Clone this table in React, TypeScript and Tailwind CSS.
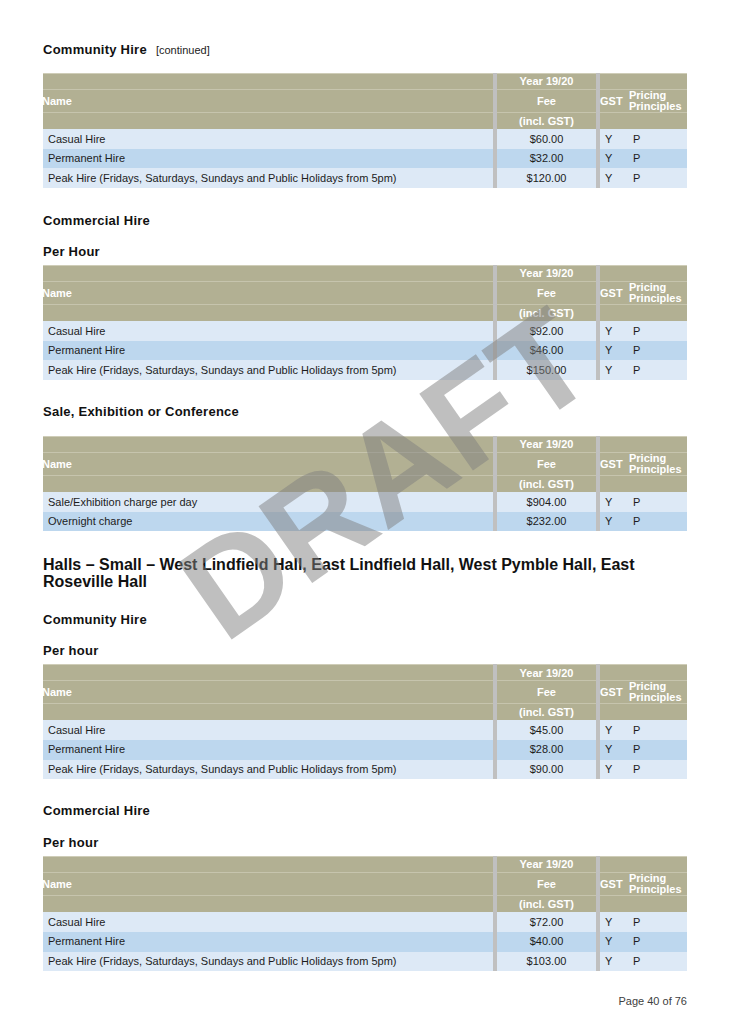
import React from 'react';

type Row = { name: string; fee: string };

const community1: Row[] = [
  { name: 'Casual Hire', fee: '$60.00' },
  { name: 'Permanent Hire', fee: '$32.00' },
  { name: 'Peak Hire (Fridays, Saturdays, Sundays and Public Holidays from 5pm)', fee: '$120.00' },
];
const commercial1: Row[] = [
  { name: 'Casual Hire', fee: '$92.00' },
  { name: 'Permanent Hire', fee: '$46.00' },
  { name: 'Peak Hire (Fridays, Saturdays, Sundays and Public Holidays from 5pm)', fee: '$150.00' },
];
const sale: Row[] = [
  { name: 'Sale/Exhibition charge per day', fee: '$904.00' },
  { name: 'Overnight charge', fee: '$232.00' },
];
const community2: Row[] = [
  { name: 'Casual Hire', fee: '$45.00' },
  { name: 'Permanent Hire', fee: '$28.00' },
  { name: 'Peak Hire (Fridays, Saturdays, Sundays and Public Holidays from 5pm)', fee: '$90.00' },
];
const commercial2: Row[] = [
  { name: 'Casual Hire', fee: '$72.00' },
  { name: 'Permanent Hire', fee: '$40.00' },
  { name: 'Peak Hire (Fridays, Saturdays, Sundays and Public Holidays from 5pm)', fee: '$103.00' },
];

// three stacked header bands, faint lines between them
function HeadCol({ className, top, mid, bottom }: {
  className: string; top?: React.ReactNode; mid?: React.ReactNode; bottom?: React.ReactNode;
}) {
  return (
    <div className={`flex flex-col ${className}`}>
      <div className="h-[16px] border-t border-[#cfcdb8] flex items-center justify-center">{top}</div>
      <div className="h-[23px] border-t border-[#c6c4ad] flex items-center">{mid}</div>
      <div className="h-[17px] border-t border-[#c6c4ad] flex items-center justify-center">{bottom}</div>
    </div>
  );
}

const Sep = () => <div className="w-[4px] shrink-0 bg-[#c0c0c0]" />;

function FeeTable({ rows }: { rows: Row[] }) {
  return (
    <div className="w-[644px] text-[11px]">
      <div className="flex h-[56px] bg-[#b2b093] text-white font-bold">
        <HeadCol className="w-[450px]" mid={<span className="-ml-px">Name</span>} />
        <Sep />
        <HeadCol className="w-[99px]" top="Year 19/20"
          mid={<span className="w-full text-center">Fee</span>} bottom="(incl. GST)" />
        <Sep />
        <HeadCol className="w-[28px]" mid="GST" />
        <HeadCol className="w-[59px]"
          mid={<span className="pl-px leading-[11px]">Pricing<br />Principles</span>} />
      </div>
      {rows.map((r, i) => (
        <div key={r.name} className={`flex h-[19.67px] text-[#1c1c1c] ${i % 2 === 1 ? 'bg-[#bdd7ee]' : 'bg-[#dde9f6]'}`}>
          <div className="w-[450px] pl-[5px] flex items-center">{r.name}</div>
          <Sep />
          <div className="w-[99px] flex items-center justify-center">{r.fee}</div>
          <Sep />
          <div className="w-[28px] pl-[5px] flex items-center">Y</div>
          <div className="w-[59px] pl-[5px] flex items-center">P</div>
        </div>
      ))}
    </div>
  );
}

function SubHead({ children, className = '' }: { children: React.ReactNode; className?: string }) {
  return (
    <h3 className={`h-[16px] leading-[18px] text-[13px] font-bold tracking-[0.25px] text-[#111] ${className}`}>
      {children}
    </h3>
  );
}

export default function App() {
  return (
    <div className="relative w-[730px] h-[1033px] bg-white overflow-hidden font-['Liberation_Sans',Arial,sans-serif]">
      <div className="px-[43px] pt-[41px]">
        <SubHead>
          Community Hire<span className="ml-[9px] text-[11px] font-normal tracking-normal text-[#222]">[continued]</span>
        </SubHead>
        <div className="mt-[16px]"><FeeTable rows={community1} /></div>

        <SubHead className="mt-[24px]">Commercial Hire</SubHead>
        <SubHead className="mt-[15px]">Per Hour</SubHead>
        <div className="mt-[6px]"><FeeTable rows={commercial1} /></div>

        <SubHead className="mt-[23px]">Sale, Exhibition or Conference</SubHead>
        <div className="mt-[17px]"><FeeTable rows={sale} /></div>

        <h2 className="mt-[25px] text-[16px] leading-[17px] font-bold text-[#111] w-[620px]">
          Halls – Small – West Lindfield Hall, East Lindfield Hall, West Pymble Hall, East Roseville Hall
        </h2>

        <SubHead className="mt-[21px]">Community Hire</SubHead>
        <SubHead className="mt-[15px]">Per hour</SubHead>
        <div className="mt-[6px]"><FeeTable rows={community2} /></div>

        <SubHead className="mt-[23px]">Commercial Hire</SubHead>
        <SubHead className="mt-[16px]">Per hour</SubHead>
        <div className="mt-[6px]"><FeeTable rows={commercial2} /></div>

        <p className="mt-[23px] w-[644px] text-right text-[11px] leading-[14px] text-[#404040]">Page 40 of 76</p>
      </div>

      {/* watermark */}
      <div className="absolute left-[386px] top-[474px] -translate-x-1/2 -translate-y-1/2 rotate-[-35deg] pointer-events-none whitespace-nowrap text-[136px] leading-none font-bold text-[#808080]/50">
        DRAFT
      </div>
    </div>
  );
}
